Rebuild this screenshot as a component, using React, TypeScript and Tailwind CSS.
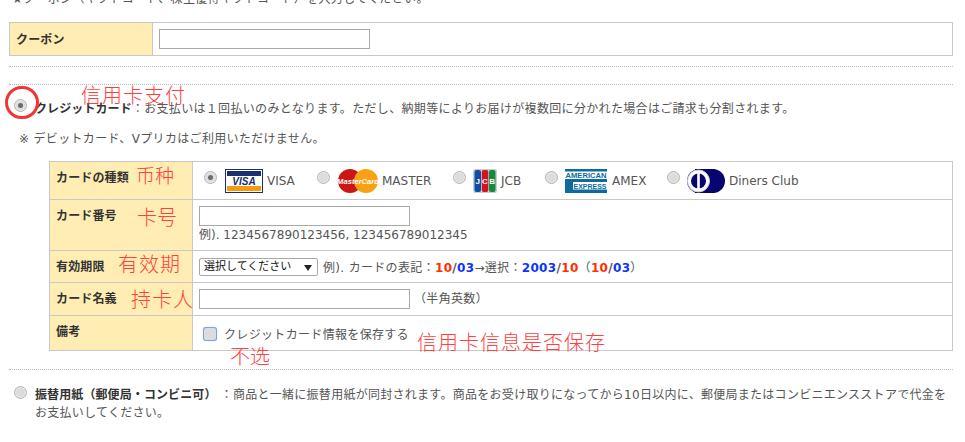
import React from "react";

const cjk = { fontFamily: '"DejaVu Sans", "Noto Sans CJK JP", sans-serif' };
const jp = "tracking-[0.33px]";

function Radio({ checked = false }: { checked?: boolean }) {
  return (
    <span className="relative top-[-3px] inline-flex h-[13px] w-[13px] shrink-0 items-center justify-center rounded-full border border-[#b4b4b4] bg-[#dcdcdc] shadow-[inset_0_0_2px_#ffffff]">
      {checked && <span className="h-[5px] w-[5px] rounded-full bg-[#6b6b6b]" />}
    </span>
  );
}

function Note({ className, children }: { className: string; children: React.ReactNode }) {
  return (
    <span
      className={`absolute whitespace-nowrap font-extralight text-[#ff4040] ${className}`}
      style={{ fontFamily: '"Noto Sans CJK SC", sans-serif' }}
    >
      {children}
    </span>
  );
}

function Visa() {
  return (
    <svg width="38" height="24" viewBox="0 0 38 24" className="block shrink-0">
      <rect x="0.5" y="0.5" width="37" height="23" fill="#fff" stroke="#1a2f6b" />
      <rect x="2" y="2" width="34" height="5" fill="#1a2f6b" />
      <rect x="2" y="17" width="34" height="5" fill="#f79a10" />
      <text x="19" y="15.5" textAnchor="middle" fontFamily="Liberation Sans" fontStyle="italic" fontWeight="700" fontSize="10" fill="#1a2f6b">VISA</text>
    </svg>
  );
}

function Master() {
  return (
    <svg width="40" height="24" viewBox="0 0 40 24" className="block shrink-0">
      <circle cx="12" cy="12" r="12" fill="#cc1517" />
      <circle cx="28" cy="12" r="12" fill="#f9a013" />
      <text x="20" y="14.5" textAnchor="middle" fontFamily="Liberation Sans" fontStyle="italic" fontWeight="700" fontSize="7.6" fill="#fff">MasterCard</text>
    </svg>
  );
}

function Jcb() {
  return (
    <svg width="24" height="24" viewBox="0 0 24 24" className="block shrink-0">
      <rect x="0" y="0" width="24" height="24" rx="2" fill="#c9ced6" />
      <rect x="1.5" y="1" width="6.5" height="22" rx="2" fill="#0e4ea5" />
      <rect x="8.8" y="1" width="6.5" height="22" rx="2" fill="#d8111f" />
      <rect x="16" y="1" width="6.5" height="22" rx="2" fill="#148a3e" />
      <text x="4.8" y="15" textAnchor="middle" fontFamily="Liberation Sans" fontWeight="700" fontSize="8" fill="#fff">J</text>
      <text x="12" y="15" textAnchor="middle" fontFamily="Liberation Sans" fontWeight="700" fontSize="8" fill="#fff">C</text>
      <text x="19.2" y="15" textAnchor="middle" fontFamily="Liberation Sans" fontWeight="700" fontSize="8" fill="#fff">B</text>
    </svg>
  );
}

function Amex() {
  return (
    <svg width="42" height="24" viewBox="0 0 42 24" className="block shrink-0">
      <rect width="42" height="24" fill="#0f6a9e" />
      <rect x="0" y="2.5" width="42" height="7.5" fill="#fff" />
      <rect x="8" y="13" width="34" height="7.5" fill="#fff" />
      <text x="21" y="9" textAnchor="middle" fontFamily="Liberation Sans" fontWeight="700" fontSize="7.5" textLength="41" lengthAdjust="spacingAndGlyphs" fill="#0f6a9e">AMERICAN</text>
      <text x="25" y="19.6" textAnchor="middle" fontFamily="Liberation Sans" fontWeight="700" fontSize="7.5" textLength="33" lengthAdjust="spacingAndGlyphs" fill="#0f6a9e">EXPRESS</text>
    </svg>
  );
}

function Diners() {
  return (
    <svg width="38" height="24" viewBox="0 0 38 24" className="block shrink-0">
      <rect x="8" y="0" width="20" height="24" fill="#06066e" />
      <circle cx="26" cy="12" r="12" fill="#06066e" />
      <circle cx="12" cy="12" r="12" fill="#06066e" />
      <circle cx="11.5" cy="12" r="11" fill="#fff" stroke="#c8c8e0" />
      <circle cx="11.5" cy="12" r="7.5" fill="#06066e" />
      <rect x="10.2" y="3" width="2.6" height="18" fill="#fff" />
    </svg>
  );
}

const labelCls =
  "border border-[#c8c8c8] bg-[#ffedb3] pl-[6px] align-top text-[12px] font-bold text-[#333] tracking-[0.15px]";
const cellCls = "border border-[#c8c8c8] bg-white pl-[6px] align-top";
const inputCls = "block h-[20px] border border-[#a9a9a9] bg-white";
const R = ({ children }: { children: React.ReactNode }) => <span className="font-bold text-[#ff3000]">{children}</span>;
const B = ({ children }: { children: React.ReactNode }) => <span className="font-bold text-[#0a35ff]">{children}</span>;

export default function App() {
  return (
    <div className="relative h-[442px] w-[965px] overflow-hidden bg-white text-[12px] text-[#555]" style={cjk}>
      <p className={`mt-[-11px] ml-[12px] h-[33px] leading-[20px] ${jp}`}>★クーポン（ギフトコード、株主優待ギフトコード）を入力してください。</p>

      <table className="ml-[9px] w-[944px] table-fixed border-collapse">
        <tbody>
          <tr className="h-[33px]">
            <td className={`${labelCls} w-[143px] pt-[8px]`}>クーポン</td>
            <td className={`${cellCls} pt-[6px]`}>
              <div className={`${inputCls} w-[211px]`} />
            </td>
          </tr>
        </tbody>
      </table>

      <div className="mt-[10px] ml-[9px] w-[944px] border-t border-dotted border-[#bbb]" />
      <div className="mt-[17px] ml-[9px] w-[944px] border-t border-dotted border-[#bbb]" />

      <div className="mt-[13px] ml-[14px] flex h-[20px] items-center gap-[8px] leading-[20px]">
        <Radio checked />
        <p className={`whitespace-nowrap pt-[2px] ${jp}`}>
          <b className="tracking-[0.1px] text-[#333]">クレジットカード</b>：お支払いは１回払いのみとなります。ただし、納期等によりお届けが複数回に分かれた場合はご請求も分割されます。
        </p>
      </div>
      <p className={`mt-[11px] ml-[19px] h-[20px] leading-[20px] ${jp}`}>※ デビットカード、Vプリカはご利用いただけません。</p>

      <table className="mt-[12px] ml-[49px] w-[904px] table-fixed border-collapse">
        <tbody>
          <tr className="h-[38px]">
            <td className={`${labelCls} w-[143px] pt-[7px]`}>カードの種類</td>
            <td className="border border-[#c8c8c8] pl-[11px]">
              <div className="flex items-center text-[#555]">
                <Radio checked />
                <span className="ml-[8px]"><Visa /></span>
                <span className="ml-[4px] w-[50px]">VISA</span>
                <Radio />
                <span className="ml-[8px]"><Master /></span>
                <span className="ml-[4px] w-[71px]">MASTER</span>
                <Radio />
                <span className="ml-[7px]"><Jcb /></span>
                <span className="ml-[4px] w-[44px]">JCB</span>
                <Radio />
                <span className="ml-[7px]"><Amex /></span>
                <span className="ml-[5px] w-[55px]">AMEX</span>
                <Radio />
                <span className="ml-[7px]"><Diners /></span>
                <span className="ml-[4px]">Diners Club</span>
              </div>
            </td>
          </tr>
          <tr className="h-[51px]">
            <td className={`${labelCls} pt-[7px]`}>カード番号</td>
            <td className={`${cellCls} pt-[6px]`}>
              <div className={`${inputCls} w-[211px]`} />
              <p className="leading-[18px]">例). 1234567890123456, 123456789012345</p>
            </td>
          </tr>
          <tr className="h-[32px]">
            <td className={`${labelCls} pt-[7px]`}>有効期限</td>
            <td className={`${cellCls} pt-[6px]`}>
              <div className="flex items-center">
                <div className="flex h-[18px] w-[119px] items-center justify-between rounded-[2px] border border-[#a9a9a9] pt-[1px] pr-[5px] pl-[4px] text-[11px] text-[#111]">
                  <span>選択してください</span>
                  <svg width="8" height="6" viewBox="0 0 8 6"><path d="M0 0h8L4 6z" fill="#222" /></svg>
                </div>
                <p className={`ml-[5px] whitespace-nowrap pt-[2px] ${jp}`}>
                  例). カードの表記：<R>10</R><b>/</b><B>03</B>→選択：<B>2003</B><b>/</b><R>10</R>（<R>10</R><b>/</b><B>03</B>）
                </p>
              </div>
            </td>
          </tr>
          <tr className="h-[33px]">
            <td className={`${labelCls} pt-[7px]`}>カード名義</td>
            <td className={`${cellCls} pt-[6px]`}>
              <div className="flex items-center">
                <div className={`${inputCls} w-[211px]`} />
                <span className={`ml-[4px] ${jp}`}>（半角英数）</span>
              </div>
            </td>
          </tr>
          <tr className="h-[35px]">
            <td className={`${labelCls} pt-[7px]`}>備考</td>
            <td className={`${cellCls} pt-[8px] pl-[10px]`}>
              <div className="flex items-center">
                <span className="h-[14px] w-[14px] rounded-[3px] border border-[#7da2e0] bg-[#dcdcdc] shadow-[0_0_1px_#7da2e0]" />
                <span className={`ml-[7px] pt-[2px] ${jp}`}>クレジットカード情報を保存する</span>
              </div>
            </td>
          </tr>
        </tbody>
      </table>

      <div className="mt-[18px] ml-[9px] w-[944px] border-t border-dotted border-[#bbb]" />

      <div className="mt-[16px] ml-[14px] flex w-[940px] gap-[8px] leading-[18px]">
        <span className="mt-[3px] flex"><Radio /></span>
        <p className="w-[925px] tracking-[0.28px]">
          <b className="tracking-[0.1px] text-[#333]">振替用紙（郵便局・コンビニ可）</b> ：商品と一緒に振替用紙が同封されます。商品をお受け取りになってから10日以内に、郵便局またはコンビニエンスストアで代金をお支払いしてください。
        </p>
      </div>

      <span className="absolute top-[86px] left-[5px] h-[33px] w-[34px] rounded-full border-[3px] border-[#ef3535]" />
      <Note className="top-[80px] left-[81px] text-[20px] tracking-[1px]">信用卡支付</Note>
      <Note className="top-[161px] left-[136px] text-[19px]">币种</Note>
      <Note className="top-[202px] left-[137px] text-[20px]">卡号</Note>
      <Note className="top-[249px] left-[118px] text-[20px] tracking-[1px]">有效期</Note>
      <Note className="top-[284px] left-[131px] text-[20px] tracking-[1px]">持卡人</Note>
      <Note className="top-[341px] left-[230px] text-[20px]">不选</Note>
      <Note className="top-[327px] left-[417px] text-[20px] tracking-[1px]">信用卡信息是否保存</Note>
    </div>
  );
}
